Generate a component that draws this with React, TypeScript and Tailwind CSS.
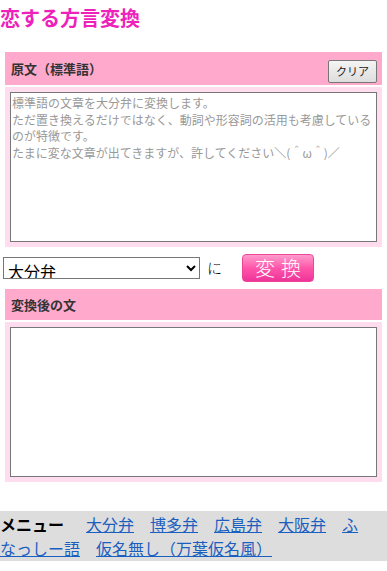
import { useState } from "react"

const font = { fontFamily: '"Noto Sans CJK JP", "Noto Sans", sans-serif' }

const dialects = ["大分弁", "博多弁", "広島弁", "大阪弁", "ふなっしー語", "仮名無し（万葉仮名風）"]

// 折り返し位置を元画面に合わせる
const placeholder =
    "標準語の文章を大分弁に変換します。\nただ置き換えるだけではなく、動詞や形容詞の活用も考慮している\nのが特徴です。\nたまに変な文章が出てきますが、許してください＼(＾ω＾)／"

const App = () => {
    const [ source, setSource ] = useState("")
    const [ dialect, setDialect ] = useState("大分弁")

    return (
        <main className="w-[387px] bg-white text-[#333]" style={font}>
            <h1 className="text-[20px] leading-[36px] font-bold text-[#ee22bb] mb-[16px]">恋する方言変換</h1>

            {/* 原文 */}
            <section className="mx-[5px]">
                <div className="h-[33px] bg-[#ffaacc] flex items-center justify-between pl-[6px] pr-[5px]">
                    <h2 className="text-[13px] font-bold">原文（標準語）</h2>
                    <button
                        onClick={() => setSource("")}
                        className="h-[23px] w-[49px] mt-[6px] border border-[#777] rounded-[2px] bg-gradient-to-b from-[#f4f4f4] to-[#dedede] text-[11px] text-[#222]"
                    >
                        クリア
                    </button>
                </div>
                <div className="mt-[2px] bg-[#ffddee] p-[5px]">
                    <textarea
                        value={source}
                        onChange={(e) => setSource(e.target.value)}
                        placeholder={placeholder}
                        className="block w-full h-[150px] resize-none border border-[#777] bg-white pl-[1px] pr-[2px] py-[2px] text-[12px] leading-[16.5px] placeholder:text-[#999] outline-none"
                    />
                </div>
            </section>

            {/* 変換 */}
            <div className="flex items-center h-[42px] pl-[3px]">
                <select
                    value={dialect}
                    onChange={(e) => setDialect(e.target.value)}
                    className="w-[197px] h-[22px] border border-[#767676] bg-white text-[16px] leading-[20px] text-black px-0"
                >
                    {dialects.map((d) => (
                        <option key={d}>{d}</option>
                    ))}
                </select>
                <span className="ml-[7px] text-[15px] text-black font-light">に</span>
                <button className="ml-[20px] w-[72px] h-[28px] rounded-[4px] border border-[#ee4499] bg-gradient-to-b from-[#ff99cc] via-[#ff55aa] to-[#ee3399] text-white text-[20px] leading-[26px] tracking-[6px] pl-[6px] font-light">
                    変換
                </button>
            </div>

            {/* 変換後 */}
            <section className="mx-[5px]">
                <div className="h-[31px] bg-[#ffaacc] flex items-center pl-[6px]">
                    <h2 className="text-[13px] font-bold">変換後の文</h2>
                </div>
                <div className="mt-[2px] bg-[#ffddee] p-[5px]">
                    <textarea
                        readOnly
                        className="block w-full h-[150px] resize-none border border-[#777] bg-white outline-none"
                    />
                </div>
            </section>

            {/* メニュー */}
            <nav className="mt-[29px] bg-[#dddddd] text-[16px] leading-[24px] py-[1px] pr-[20px]">
                <b className="text-black mr-[22px]">メニュー</b>
                {dialects.map((d) => (
                    <a key={d} href="#" className="text-[#1a5fc0] underline mr-[16px]">
                        {d}
                    </a>
                ))}
            </nav>
        </main>
    )
}

export default App
